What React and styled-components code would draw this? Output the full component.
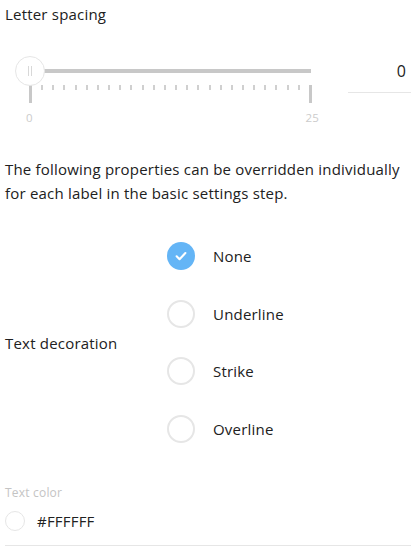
import React, { useState } from 'react';
import styled, { createGlobalStyle } from 'styled-components';

const GlobalStyle = createGlobalStyle`
  body {
    margin: 0;
    background: #fff;
    font-family: "Open Sans", Lato, sans-serif;
    color: #212121;
  }
`;

const DECORATIONS = ['None', 'Underline', 'Strike', 'Overline'];
const MAX = 25;

function App() {
  const [spacing] = useState(0);
  const [decoration, setDecoration] = useState('None');

  return (
    <Page>
      <GlobalStyle />
      <Title>Letter spacing</Title>

      <SliderRow>
        <Slider>
          <Rail />
          <Ticks>
            {Array.from({ length: MAX + 1 }).map((_, i) => (
              <Tick key={i} $big={i === 0 || i === MAX} />
            ))}
          </Ticks>
          <Marks>
            <Mark>0</Mark>
            <Mark>{MAX}</Mark>
          </Marks>
          <Handle style={{ left: `${(spacing / MAX) * 100}%` }}>
            <Grip />
            <Grip />
          </Handle>
        </Slider>
        <ValueBox>{spacing}</ValueBox>
      </SliderRow>

      <Note>
        The following properties can be overridden individually for each label
        in the basic settings step.
      </Note>

      <FieldRow>
        <FieldLabel>Text decoration</FieldLabel>
        <RadioList>
          {DECORATIONS.map(d => (
            <RadioItem key={d} onClick={() => setDecoration(d)}>
              <RadioCircle $checked={decoration === d}>
                {decoration === d && (
                  <svg width="14" height="14" viewBox="0 0 24 24">
                    <path
                      d="M4.5 12.5l5 5L19.5 7"
                      fill="none"
                      stroke="#fff"
                      strokeWidth="3.6"
                      strokeLinecap="round"
                      strokeLinejoin="round"
                    />
                  </svg>
                )}
              </RadioCircle>
              <RadioText>{d}</RadioText>
            </RadioItem>
          ))}
        </RadioList>
      </FieldRow>

      <SmallLabel>Text color</SmallLabel>
      <ColorRow>
        <Swatch />
        <ColorValue>#FFFFFF</ColorValue>
      </ColorRow>
    </Page>
  );
}

const Page = styled.div`
  width: 406px;
  padding: 4px 2px 0 5px;
  font-size: 15px;
  letter-spacing: 0.2px;
`;

const Title = styled.div`
  line-height: 20px;
`;

const SliderRow = styled.div`
  display: flex;
  align-items: flex-start;
  margin-top: 32px;
`;

const Slider = styled.div`
  position: relative;
  width: 281px;
  height: 70px;
  margin-left: 25px;
`;

const Rail = styled.div`
  margin-top: 13px;
  height: 4px;
  background: #c8c8c8;
`;

const Ticks = styled.div`
  display: flex;
  justify-content: space-between;
  align-items: flex-start;
  margin-top: 12px;
  margin-left: -1px;
  margin-right: -1px;
`;

const Tick = styled.div`
  width: ${({ $big }) => ($big ? '3px' : '2px')};
  height: ${({ $big }) => ($big ? '18px' : '5px')};
  background: ${({ $big }) => ($big ? '#c8c8c8' : '#d0d0d0')};
`;

const Marks = styled.div`
  display: flex;
  justify-content: space-between;
  margin: 8px -8px 0 -4px;
  font-size: 11.5px;
  line-height: 14px;
  color: #cccccc;
`;

const Mark = styled.span``;

const Handle = styled.div`
  position: absolute;
  top: 0;
  width: 30px;
  height: 30px;
  margin-left: -15px;
  box-sizing: border-box;
  border: 1px solid #e6e6e6;
  border-radius: 50%;
  background: #fff;
  display: flex;
  align-items: center;
  justify-content: center;
  gap: 2px;
`;

const Grip = styled.span`
  width: 1px;
  height: 10px;
  background: #d8d8d8;
`;

const ValueBox = styled.div`
  margin-left: auto;
  width: 63px;
  height: 37px;
  box-sizing: border-box;
  padding: 5px 5px 0;
  border-bottom: 1px solid #e6e6e6;
  text-align: right;
  font-size: 16px;
  line-height: 20px;
`;

const Note = styled.p`
  max-width: 402px;
  margin: 31px 0 0;
  line-height: 24px;
  color: #212121;
`;

const FieldRow = styled.div`
  display: grid;
  grid-template-columns: 162px 1fr;
  align-items: center;
  margin-top: 22.5px;
`;

const FieldLabel = styled.div`
  line-height: 20px;
`;

const RadioList = styled.div`
  display: flex;
  flex-direction: column;
`;

const RadioItem = styled.div`
  display: flex;
  align-items: center;
  gap: 18px;
  height: 57.5px;
  cursor: pointer;
`;

const RadioCircle = styled.span`
  width: 28px;
  height: 28px;
  box-sizing: border-box;
  border-radius: 50%;
  display: flex;
  align-items: center;
  justify-content: center;
  border: ${({ $checked }) => ($checked ? 'none' : '2px solid #e6e6e6')};
  background: ${({ $checked }) => ($checked ? '#64b5f6' : '#fff')};
`;

const RadioText = styled.span`
  line-height: 20px;
`;

const SmallLabel = styled.div`
  margin-top: 27px;
  font-size: 12px;
  line-height: 16px;
  color: #c4c4c4;
`;

const ColorRow = styled.div`
  display: flex;
  align-items: center;
  gap: 12px;
  height: 24px;
  margin-top: 8px;
  padding-bottom: 12px;
  border-bottom: 1px solid #e6e6e6;
`;

const Swatch = styled.span`
  width: 20px;
  height: 20px;
  box-sizing: border-box;
  border-radius: 50%;
  border: 1px solid #e6e6e6;
  background: #fff;
`;

const ColorValue = styled.span`
  line-height: 20px;
`;

export default App;
